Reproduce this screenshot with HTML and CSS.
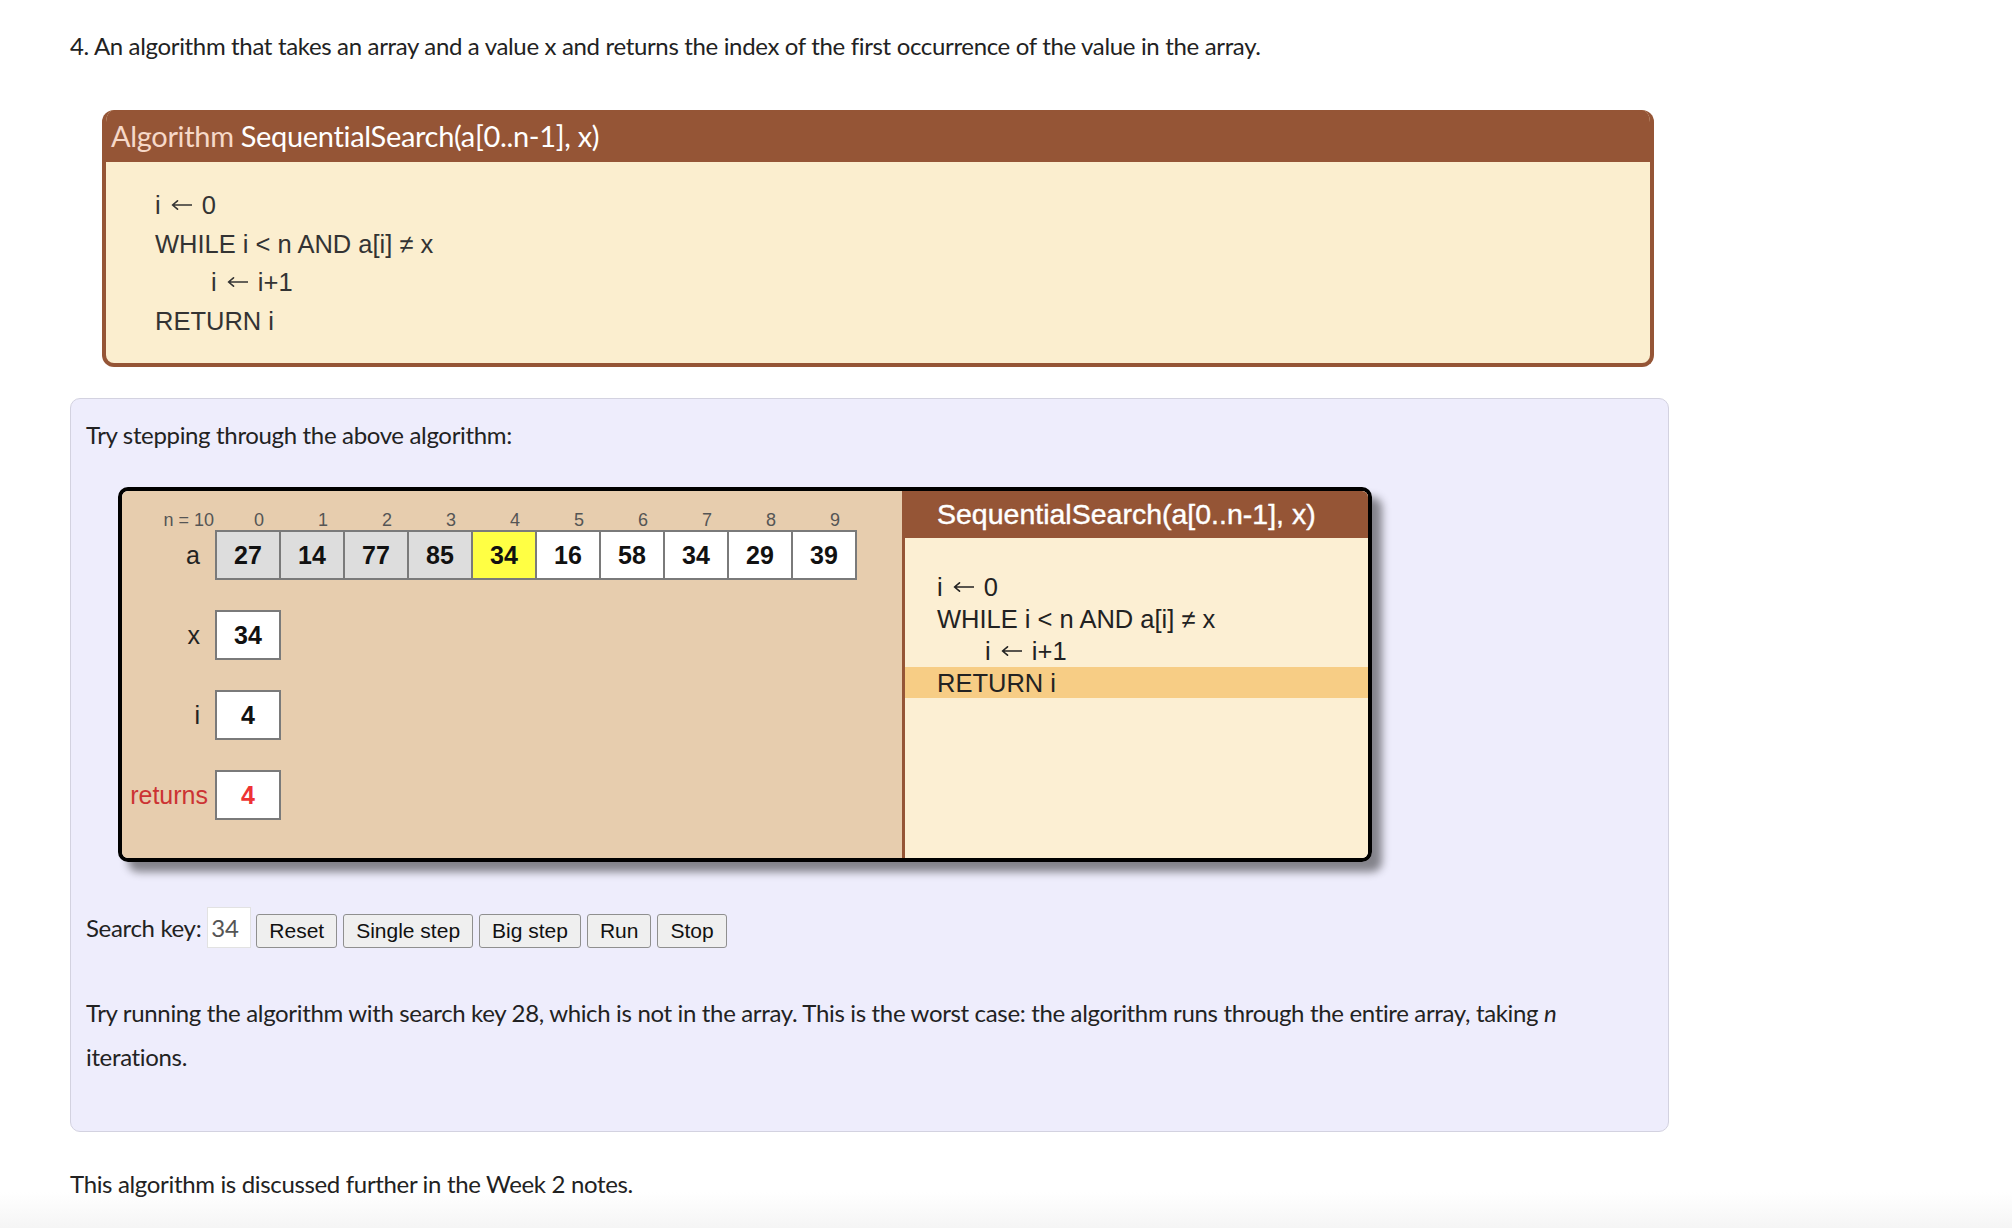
FILE: index.html
```html
<!DOCTYPE html>
<html>
<head>
<meta charset="utf-8">
<link rel="stylesheet" href="styles.css">
</head>
<body>
<div class="page">
  <p class="text heading">4. An algorithm that takes an array and a value x and returns the index of the first occurrence of the value in the array.</p>

  <div class="algo">
    <div class="algo-head"><span class="kw">Algorithm</span> SequentialSearch(a[0..n-1], x)</div>
    <div class="algo-body">
      <div class="line">i <svg class="arr" viewBox="0 0 21 12" width="21" height="12"><path d="M20.5 6H1.5M6.5 1.8L1.5 6L6.5 10.2"/></svg> 0</div>
      <div class="line">WHILE i &lt; n AND a[i] ≠ x</div>
      <div class="line indent">i <svg class="arr" viewBox="0 0 21 12" width="21" height="12"><path d="M20.5 6H1.5M6.5 1.8L1.5 6L6.5 10.2"/></svg> i+1</div>
      <div class="line">RETURN i</div>
    </div>
  </div>

  <div class="tryit">
    <p class="text">Try stepping through the above algorithm:</p>

    <div class="viz">
      <div class="vars">
        <div class="idx-row">
          <span class="lbl-n">n = 10</span>
          <span class="idx">0</span><span class="idx">1</span><span class="idx">2</span><span class="idx">3</span><span class="idx">4</span><span class="idx">5</span><span class="idx">6</span><span class="idx">7</span><span class="idx">8</span><span class="idx">9</span>
        </div>
        <div class="row">
          <span class="lbl">a</span>
          <div class="cells">
            <span class="cell done">27</span><span class="cell done">14</span><span class="cell done">77</span><span class="cell done">85</span><span class="cell cur">34</span><span class="cell">16</span><span class="cell">58</span><span class="cell">34</span><span class="cell">29</span><span class="cell">39</span>
          </div>
        </div>
        <div class="row">
          <span class="lbl">x</span>
          <span class="cell single">34</span>
        </div>
        <div class="row">
          <span class="lbl">i</span>
          <span class="cell single">4</span>
        </div>
        <div class="row">
          <span class="lbl red">returns</span>
          <span class="cell single red">4</span>
        </div>
      </div>
      <div class="code">
        <div class="code-head">SequentialSearch(a[0..n-1], x)</div>
        <div class="code-body">
          <div class="cline">i <svg class="arr" viewBox="0 0 21 12" width="21" height="12"><path d="M20.5 6H1.5M6.5 1.8L1.5 6L6.5 10.2"/></svg> 0</div>
          <div class="cline">WHILE i &lt; n AND a[i] ≠ x</div>
          <div class="cline indent2">i <svg class="arr" viewBox="0 0 21 12" width="21" height="12"><path d="M20.5 6H1.5M6.5 1.8L1.5 6L6.5 10.2"/></svg> i+1</div>
          <div class="cline hl">RETURN i</div>
        </div>
      </div>
    </div>

    <div class="controls">
      <span class="text">Search key:</span>
      <input class="key" type="text" value="34">
      <button class="btn">Reset</button>
      <button class="btn">Single step</button>
      <button class="btn">Big step</button>
      <button class="btn">Run</button>
      <button class="btn">Stop</button>
    </div>

    <p class="text note">Try running the algorithm with search key 28, which is not in the array. This is the worst case: the algorithm runs through the entire array, taking <em>n</em> iterations.</p>
  </div>

  <p class="text final">This algorithm is discussed further in the Week 2 notes.</p>
</div>
</body>
</html>
```

FILE: styles.css
```css
* { box-sizing: border-box; }
html {
  margin: 0;
  padding: 0;
  min-height: 1228px;
  background: linear-gradient(#ffffff 0, #ffffff 1192px, #f5f5f5 1228px);
}
body {
  margin: 0;
  padding: 0;
  font-family: "Lato", "Open Sans", sans-serif;
  color: #222;
}

.page {
  padding: 24px 0 0 70px;
  width: 1700px;
}

.text {
  margin: 0;
  font-size: 24px;
  line-height: 44px;
  letter-spacing: -0.34px;
  color: #222;
}

/* Algorithm box */
.algo {
  margin: 42px 0 0 32px;
  width: 1552px;
  height: 257px;
  border: 4px solid #955536;
  border-top: 0;
  border-radius: 12px;
  background: #fbeecf;
  overflow: hidden;
}
.algo-head {
  height: 52px;
  background: #955536;
  color: #ffffff;
  font-size: 29px;
  letter-spacing: -0.33px;
  line-height: 52px;
  padding-left: 5px;
}
.algo-head .kw { color: #f6d8c8; }
.algo-body {
  padding: 24px 0 0 49px;
  font-family: "Liberation Sans", Arial, sans-serif;
  font-size: 25.5px;
  color: #333;
}
.algo-body .line { height: 38.5px; line-height: 38.5px; }
.algo-body .indent { padding-left: 56px; }

.arr {
  display: inline-block;
  vertical-align: middle;
  margin: -4px 3px 0 3px;
  fill: none;
  stroke: #333;
  stroke-width: 1.6;
  stroke-linecap: round;
  stroke-linejoin: round;
}

/* Try-it panel */
.tryit {
  margin-top: 31px;
  width: 1599px;
  height: 734px;
  background: #eeedfc;
  border: 1px solid #d3d2e0;
  border-radius: 10px;
  padding: 14px 0 0 15px;
}

.viz {
  margin: 30px 0 0 32px;
  width: 1254px;
  height: 375px;
  border: 4px solid #000;
  border-radius: 10px;
  box-shadow: 10px 10px 9px rgba(0, 0, 0, 0.45);
  display: flex;
  overflow: hidden;
  font-family: "Liberation Sans", Arial, sans-serif;
}

.vars {
  flex: none;
  width: 783px;
  background: #e7cdae;
  border-right: 3px solid #955536;
  padding-top: 20px;
}

.idx-row {
  display: flex;
  height: 19px;
  line-height: 18px;
  font-size: 18px;
  color: #555;
}
.lbl-n {
  width: 93px;
  text-align: right;
  padding-right: 1px;
}
.idx {
  display: block;
  flex: none;
  width: 64px;
  padding-left: 24px;
  text-align: center;
}

.row {
  display: flex;
  align-items: center;
  height: 50px;
  margin-bottom: 30px;
}
.lbl {
  width: 93px;
  text-align: right;
  padding-right: 15px;
  font-size: 25px;
  color: #222;
}
.lbl.red { color: #cc3333; font-size: 25px; padding-right: 7px; }

.cells { display: flex; }
.cell {
  display: block;
  width: 66px;
  height: 50px;
  border: 2px solid #7a7a7a;
  background: #ffffff;
  text-align: center;
  line-height: 46px;
  font-weight: bold;
  font-size: 25px;
  color: #111;
}
.cells .cell + .cell { margin-left: -2px; }
.cell.done { background: #dddddd; }
.cell.cur { background: #ffff44; }
.cell.red { color: #ee3333; }

.code {
  flex: 1;
  background: #fcefd3;
}
.code-head {
  height: 47px;
  background: #955536;
  color: #ffffff;
  font-size: 28.5px;
  line-height: 47px;
  padding-left: 32px;
  -webkit-text-stroke: 0.4px #ffffff;
}
.code-body {
  padding-top: 33px;
  font-size: 25.5px;
  color: #222;
}
.code-body .arr { stroke: #222; }
.cline {
  height: 32px;
  line-height: 32px;
  padding-left: 32px;
}
.cline.indent2 { padding-left: 80px; }
.cline.hl { background: #f7cd85; height: 31px; }

/* Controls */
.controls {
  margin-top: 45px;
  display: flex;
  align-items: center;
  height: 41px;
}
.controls .text { margin-right: 6px; }
.key {
  width: 44px;
  height: 41px;
  border: 1px solid #e2e2e2;
  background: #fff;
  font-family: "Lato", sans-serif;
  font-size: 24px;
  letter-spacing: -0.34px;
  color: #555;
  padding: 0 0 0 3px;
  margin: 0 5px 0 0;
  outline: none;
}
.btn {
  height: 34px;
  margin: 6px 6px 0 0;
  padding: 0 12px;
  border: 1px solid #8f8f8f;
  border-radius: 3px;
  background: #efefef;
  font-family: "Liberation Sans", Arial, sans-serif;
  font-size: 21px;
  color: #111;
}

.note {
  margin-top: 43px;
  width: 1560px;
}
.note em { font-style: italic; }

.final {
  margin-top: 30px;
}
```
